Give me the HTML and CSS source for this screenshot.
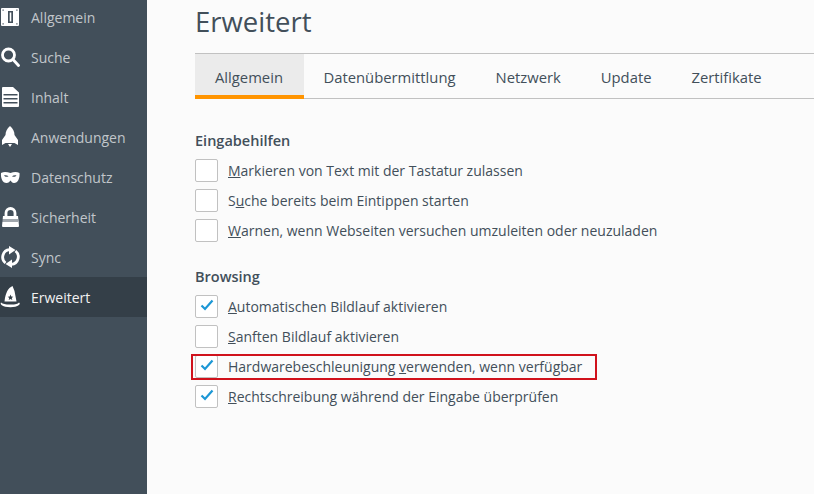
FILE: index.html
```html
<!DOCTYPE html>
<html lang="de">
<head>
  <meta charset="UTF-8">
  <title>Erweitert</title>
  <link rel="stylesheet" href="styles.css">
</head>
<body>
  <div class="sidebar">
    <div class="navItem">
      <svg class="navIcon" viewBox="0 0 20 24"><path fill-rule="evenodd" d="M2 3h16a1 1 0 0 1 1 1v16a1 1 0 0 1-1 1H2a1 1 0 0 1-1-1V4a1 1 0 0 1 1-1zM8 6v12h5V6zM9.700 7.500h1.600v9H9.700zM2.500 4.500v1.200h1.200V4.500zM16.300 4.500v1.200h1.200V4.500zM2.500 18.300v1.200h1.200v-1.200zM16.300 18.300v1.200h1.200v-1.200z"/></svg>
      <span>Allgemein</span>
    </div>
    <div class="navItem">
      <svg class="navIcon" viewBox="0 0 20 24"><circle class="iconLine" cx="8.500" cy="10" r="6"/><path class="iconLine" d="M13 14.500l5.500 6" stroke-width="3.200" stroke-linecap="round"/></svg>
      <span>Suche</span>
    </div>
    <div class="navItem">
      <svg class="navIcon" viewBox="0 0 20 24"><path fill-rule="evenodd" d="M3 2h10l6 5.500V21a1 1 0 0 1-1 1H3a1 1 0 0 1-1-1V3a1 1 0 0 1 1-1zM3.500 9v1.500h14V9zM3.500 13v1.500h14V13zM3.500 17v1.500h14V17z"/></svg>
      <span>Inhalt</span>
    </div>
    <div class="navItem">
      <svg class="navIcon" viewBox="0 0 20 24"><path d="M10 1c3 2.500 4.500 5.500 4.500 9l3.500 5v5l-3.500-2h-9L2 20v-5l3.500-5c0-3.500 1.500-6.500 4.500-9z"/><path d="M8 19h4l-2 3z"/></svg>
      <span>Anwendungen</span>
    </div>
    <div class="navItem">
      <svg class="navIcon" viewBox="0 0 20 24"><path fill-rule="evenodd" d="M1 8c3-1.500 6-1 9.500 0 3-1 6-1.500 9 0 .5 5-1.500 10-5.500 10-1.700 0-2.700-1.500-3.500-2.500-.8 1-2 2.500-4 2.500-4 0-6-5-5.500-10zM4 10.500c1 1.500 3 1.800 4.500.7-1.300-1-3.200-1.300-4.500-.7zM16.500 10.500c-1.300-.6-3.200-.3-4.500.7 1.500 1.100 3.500.8 4.500-.7z"/></svg>
      <span>Datenschutz</span>
    </div>
    <div class="navItem">
      <svg class="navIcon" viewBox="0 0 20 24"><path class="iconLine" d="M6 11V8a4.500 4.500 0 0 1 9 0v3" stroke-width="2.400"/><path d="M3 11h15l1 10a1 1 0 0 1-1 1H3a1 1 0 0 1-1-1z"/><path d="M2.500 15.500h16" stroke="#424f5a" stroke-width="3" stroke-dasharray="1 1"/></svg>
      <span>Sicherheit</span>
    </div>
    <div class="navItem">
      <svg class="navIcon" viewBox="0 0 20 24"><path class="iconLine" d="M5.500 18A7.500 7.500 0 0 1 9.500 4.700" stroke-width="3.800"/><path d="M9 1l6.500 4-6.500 4.500z"/><path class="iconLine" d="M15.500 6A7.500 7.500 0 0 1 11.500 19.300" stroke-width="3.800"/><path d="M12 23l-6.500-4 6.500-4.500z"/></svg>
      <span>Sync</span>
    </div>
    <div class="navItem navActive">
      <svg class="navIcon" viewBox="0 0 20 24"><path fill-rule="evenodd" d="M12.500 1C8 3 5.500 8 4.500 16.500h12L14.500 6zM10.500 9.500l-.8 2-2 .2 1.500 1.300-.5 2 1.800-1 1.800 1-.5-2 1.500-1.300-2-.2z"/><path d="M1 17.500c2 1.500 4 2 9.500 2s7-.5 8.500-2c1 .5 1 1.500 0 2.500-2 1.700-5 2.200-8.500 2.200S3 21.700 1.500 20c-1-1-1-2-.5-2.500z"/></svg>
      <span>Erweitert</span>
    </div>
  </div>

  <div class="main">
    <h1 class="title">Erweitert</h1>
    <div class="tabs">
      <div class="tab tabSelected">Allgemein</div>
      <div class="tab">Datenübermittlung</div>
      <div class="tab">Netzwerk</div>
      <div class="tab">Update</div>
      <div class="tab">Zertifikate</div>
    </div>

    <div class="group">
      <h2 class="groupTitle">Eingabehilfen</h2>
      <div class="option"><div class="box"></div><span><u>M</u>arkieren von Text mit der Tastatur zulassen</span></div>
      <div class="option"><div class="box"></div><span>S<u>u</u>che bereits beim Eintippen starten</span></div>
      <div class="option"><div class="box"></div><span><u>W</u>arnen, wenn Webseiten versuchen umzuleiten oder neuzuladen</span></div>
    </div>

    <div class="group">
      <h2 class="groupTitle">Browsing</h2>
      <div class="option"><div class="box"><svg class="check" viewBox="0 0 14 12"><path d="M1.500 6.500l3.500 3.500 7.500-8.500"/></svg></div><span><u>A</u>utomatischen Bildlauf aktivieren</span></div>
      <div class="option"><div class="box"></div><span><u>S</u>anften Bildlauf aktivieren</span></div>
      <div class="option"><div class="box"><svg class="check" viewBox="0 0 14 12"><path d="M1.500 6.500l3.500 3.500 7.500-8.500"/></svg></div><span>Hardwarebeschleunigung <u>v</u>erwenden, wenn verfügbar</span><div class="marker"></div></div>
      <div class="option"><div class="box"><svg class="check" viewBox="0 0 14 12"><path d="M1.500 6.500l3.500 3.500 7.500-8.500"/></svg></div><span><u>R</u>echtschreibung während der Eingabe überprüfen</span></div>
    </div>
  </div>
</body>
</html>
```

FILE: styles.css
```css
html, body {
  height: 100%;
}

body {
  margin: 0;
  display: flex;
  overflow: hidden;
  background-color: #fbfbfb;
  font-family: "Open Sans", "Noto Sans", sans-serif;
  color: #424f5a;
}

/* sidebar */
.sidebar {
  width: 147px;
  flex-shrink: 0;
  background-color: #424f5a;
}
.navItem {
  display: flex;
  align-items: center;
  height: 40px;
  gap: 11px;
  font-size: 14px;
  color: #c1c6ca;
  position: relative;
  top: -3px;
}
.navIcon {
  width: 20px;
  height: 24px;
  fill: #fff;
  flex-shrink: 0;
}
.iconLine {
  fill: none;
  stroke: #fff;
  stroke-width: 2.800;
}
.navActive {
  background-color: #343f48;
  color: #f1f1f1;
}

/* content */
.main {
  flex: 1;
  padding-left: 48px;
}
.title {
  margin: 0;
  height: 53px;
  font-size: 27.500px;
  font-weight: 400;
  line-height: 43px;
}
.tabs {
  display: flex;
  height: 44px;
  border-top: 1px solid #c1c1c1;
  border-bottom: 1px solid #c1c1c1;
  margin-bottom: 28px;
}
.tab {
  padding: 0 20px;
  font-size: 14.800px;
  line-height: 47px;
  height: 44px;
}
.tabSelected {
  background-color: #ebebeb;
  border-bottom: 4px solid #ff9400;
  height: 41px;
  padding-right: 20.500px;
}

.group {
  margin-bottom: 18px;
}
.groupTitle {
  margin: 0;
  font-size: 14.500px;
  font-weight: 600;
  line-height: 28px;
}
.option {
  display: flex;
  align-items: center;
  height: 30px;
  gap: 10px;
  font-size: 14px;
  position: relative;
}
.box {
  width: 21px;
  height: 21px;
  border: 1px solid #c1c1c1;
  border-radius: 2px;
  background-color: #fff;
  display: flex;
  align-items: center;
  justify-content: center;
}
.check {
  width: 14px;
  height: 12px;
  margin-top: -3px;
  fill: none;
  stroke: #1c97d5;
  stroke-width: 2.200;
}
.marker {
  position: absolute;
  left: -4px;
  top: 3px;
  width: 402px;
  height: 22px;
  border: 2px solid #d0121c;
}
```
